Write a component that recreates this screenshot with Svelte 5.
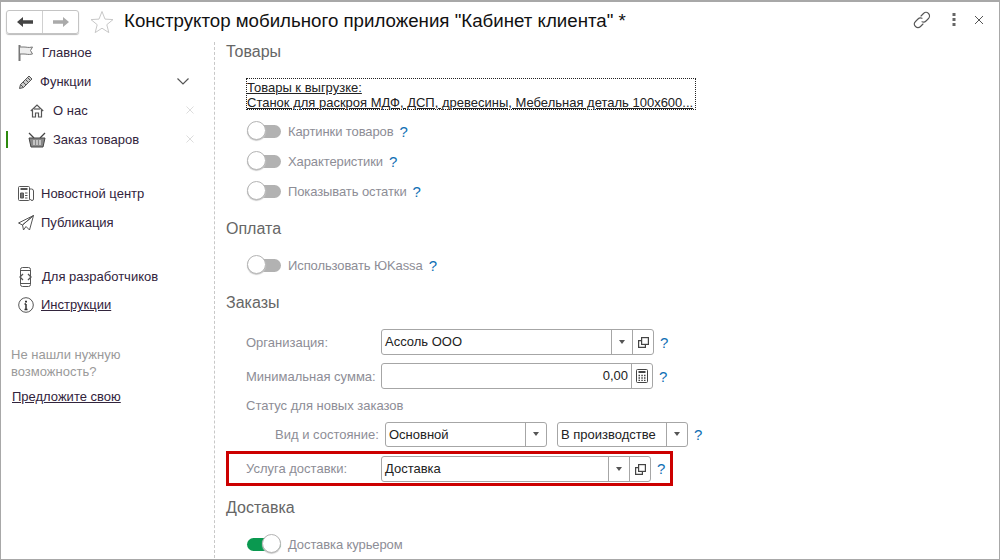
<script>
  const toggles1 = [
    { label: 'Картинки товаров' },
    { label: 'Характеристики' },
    { label: 'Показывать остатки' }
  ];
</script>

{#snippet help()}<span class="help">?</span>{/snippet}

{#snippet toggle(label, on = false)}
  <div class="toggle-row">
    <span class="toggle" class:on><span class="knob"></span></span>
    <span class="muted tl">{label}</span>
    {#if !on}{@render help()}{/if}
  </div>
{/snippet}

{#snippet open()}
  <svg class="ic" width="14" height="14" viewBox="0 0 14 14" fill="none" stroke="#444" stroke-width="1.2"><rect x="5.6" y="2.6" width="6.8" height="6.8"/><path d="M5.6 5.6H2.6v6.8h6.8V9.400"/></svg>
{/snippet}

{#snippet drop()}<span class="btn"><i class="caret"></i></span>{/snippet}

<div class="window">
  <header class="top">
    <div class="nav">
      <span class="nav-btn">
        <svg width="18" height="12" viewBox="0 0 18 12"><path d="M1 6l6-5v3.200h10v3.600H7V11z" fill="#444"/></svg>
      </span>
      <span class="nav-btn">
        <svg width="18" height="12" viewBox="0 0 18 12"><path d="M17 6l-6-5v3.200H1v3.600h10V11z" fill="#aaa"/></svg>
      </span>
    </div>
    <svg class="star" width="24" height="24" viewBox="0 0 24 24" fill="none" stroke="#c8c8c8" stroke-width="1"><path d="M12 1.500l3 7.600 8 .5-6.200 5.100 2 7.900L12 18.200 5.200 22.600l2-7.900L1 9.600l8-.5z"/></svg>
    <h1>Конструктор мобильного приложения "Кабинет клиента" *</h1>
    <div class="tools">
      <svg width="18" height="18" viewBox="0 0 18 18" fill="none" stroke="#555" stroke-width="1.100" stroke-linecap="round"><path d="M8 5l2.500-2.500a3.500 3.500 0 0 1 5 5L13 10a3.500 3.500 0 0 1-4 .7"/><path d="M10 13l-2.500 2.500a3.500 3.500 0 0 1-5-5L5 8a3.500 3.500 0 0 1 4-.7"/></svg>
      <svg width="4" height="14" viewBox="0 0 4 14" fill="#666"><rect x="0.500" y="0" width="3" height="3"/><rect x="0.500" y="5" width="3" height="3"/><rect x="0.500" y="10" width="3" height="3"/></svg>
      <svg width="10" height="10" viewBox="0 0 10 10" stroke="#555" fill="none"><path d="M1 1l8 8M9 1l-8 8"/></svg>
    </div>
  </header>

  <div class="body">
    <aside class="side">
      <div class="item first">
        <svg class="si" width="18" height="18" viewBox="0 0 18 18" fill="none" stroke="#777"><path d="M1.500 1v16" stroke-width="2"/><path d="M2 3h4c3 0 4 1 8.500 0l-2 3.500 2 3.500c-4.500 1-5.500 0-8.500 0H2" fill="#eee"/></svg>
        <span>Главное</span>
      </div>
      <div class="item func">
        <svg class="si" width="16" height="16" viewBox="0 0 16 16" fill="#ccc" stroke="#555"><path d="M1.500 14.500l1-4L11 2l3 3-8.500 8.500z"/><path d="M9.500 3.500l3 3M2.500 10.500l3 3M5 8l3 3M7.500 5.500l3 3"/></svg>
        <span>Функции</span>
        <svg class="chev" width="12" height="7" viewBox="0 0 12 7" fill="none" stroke="#555" stroke-width="1.200"><path d="M.5.500L6 6l5.500-5.500"/></svg>
      </div>
      <div class="item sub">
        <svg class="si" width="14" height="14" viewBox="0 0 14 14" fill="none" stroke="#555" stroke-width="1.200"><path d="M.8 7L7 1l6.200 6"/><path d="M2.500 6v7h3V9h3v4h3V6"/><path d="M4 5h6" /></svg>
        <span>О нас</span>
        <svg class="x" width="8" height="8" viewBox="0 0 8 8" stroke="#ddd" fill="none"><path d="M.5.500l7 7M7.500.500l-7 7"/></svg>
      </div>
      <div class="item sub active">
        <svg class="si basket" width="18" height="16" viewBox="0 0 18 16" fill="none" stroke="#444"><path d="M1 1l5 5M17 1l-5 5" stroke-width="1.300"/><path d="M1 6h16l-2 9H3z" fill="#888"/><path d="M6 8v5M9 8v5M12 8v5" stroke="#fff"/></svg>
        <span>Заказ товаров</span>
        <svg class="x" width="8" height="8" viewBox="0 0 8 8" stroke="#ddd" fill="none"><path d="M.5.500l7 7M7.500.500l-7 7"/></svg>
      </div>

      <div class="item gap">
        <svg class="si" width="16" height="15" viewBox="0 0 16 15" fill="none" stroke="#555"><rect x=".5" y=".5" width="11" height="14" rx="1"/><path d="M11.500 3h2a2 2 0 0 1 2 2v8a1.500 1.500 0 0 1-3 0"/><path d="M2.500 3h7" stroke-width="2"/><path d="M2.500 7h3v5h-3zM7 7h2.500M7 9.500h2.500M7 12h2.500" fill="#777"/></svg>
        <span>Новостной центр</span>
      </div>
      <div class="item">
        <svg class="si" width="16" height="16" viewBox="0 0 16 16" fill="none" stroke="#555"><path d="M15.500.5L.5 8l4 2zM15.500.5L4.500 10l1 5 2.500-3.500M15.500.5L11.500 15 8 11.500"/></svg>
        <span>Публикация</span>
      </div>

      <div class="item gap">
        <svg class="si" width="15" height="20" viewBox="0 0 15 20" fill="none" stroke="#555"><rect x="2.500" y=".5" width="10" height="19" rx="2"/><path d="M2.500 3.500h10M2.500 16.500h10"/><path d="M5 7L2 10l3 3M10 7l3 3-3 3" fill="#fff" stroke-width="1.300"/></svg>
        <span class="dev">Для разработчиков</span>
      </div>
      <div class="item tight">
        <svg class="si" width="16" height="16" viewBox="0 0 16 16" fill="none" stroke="#555"><circle cx="8" cy="8" r="7.300"/><path d="M8 7v5M6.500 12.500h3M6.500 7H8" stroke-width="1.500" stroke="#333"/><path d="M7 3.700h2v1.800H7z" fill="#333" stroke="none"/></svg>
        <span class="under">Инструкции</span>
      </div>

      <p class="hint">Не нашли нужную возможность?</p>
      <a class="suggest" href="#top">Предложите свою</a>
    </aside>

    <main class="main">
      <h2 class="sec-first">Товары</h2>
      <div class="linkbox"><span class="u">Товары к выгрузке:</span><br><span class="u">Станок для раскроя МДФ, ДСП, древесины, Мебельная деталь 100х600...</span></div>
      <div class="toggles">
        {#each toggles1 as t}
          {@render toggle(t.label)}
        {/each}
      </div>

      <h2 class="sec-pay">Оплата</h2>
      <div class="toggles single">{@render toggle('Использовать ЮKassa')}</div>

      <h2 class="sec-ord">Заказы</h2>
      <div class="form">
        <div class="row">
          <span class="muted lbl">Организация:</span>
          <div class="field w-org">
            <span class="val">Ассоль ООО</span>
            {@render drop()}
            <span class="btn">{@render open()}</span>
          </div>
          {@render help()}
        </div>
        <div class="row">
          <span class="muted lbl">Минимальная сумма:</span>
          <div class="field w-sum">
            <span class="val right">0,00</span>
            <span class="btn">
              <svg width="12" height="14" viewBox="0 0 12 14" fill="none" stroke="#444"><rect x=".5" y=".5" width="11" height="13" rx="1"/><path d="M2.500 3h7" stroke-width="2"/><path d="M2.500 6.500h1.500M5.300 6.500h1.500M8 6.500h1.500M2.500 9h1.500M5.300 9h1.500M8 9h1.500M2.500 11.300h1.500M5.300 11.300h1.500M8 11.300h1.500" stroke-width="1.300"/></svg>
            </span>
          </div>
          {@render help()}
        </div>
        <div class="status muted">Статус для новых заказов</div>
        <div class="row state">
          <span class="muted kind">Вид и состояние:</span>
          <div class="field w-kind"><span class="val">Основной</span>{@render drop()}</div>
          <div class="field w-st"><span class="val">В производстве</span>{@render drop()}</div>
          {@render help()}
        </div>
        <div class="highlight">
          <div class="row inner">
            <span class="muted lbl">Услуга доставки:</span>
            <div class="field w-del">
              <span class="val">Доставка</span>
              {@render drop()}
              <span class="btn">{@render open()}</span>
            </div>
            {@render help()}
          </div>
        </div>
      </div>

      <h2 class="sec-del">Доставка</h2>
      <div class="toggles single last">{@render toggle('Доставка курьером', true)}</div>
    </main>
  </div>
</div>

<style>
  :global(body) { margin: 0; background: #fff; }
  .window {
    box-sizing: border-box; width: 1000px; height: 560px; overflow: hidden;
    border: 1px solid #a8a8a8; border-top-width: 2px;
    font: 13px "Liberation Sans", Arial, sans-serif; color: #333; background: #fff;
  }
  .top { height: 38px; display: flex; align-items: center; padding-left: 5px; box-sizing: border-box; }
  .nav {
    display: flex; width: 73px; height: 24px; margin-top: 1px; box-sizing: border-box;
    border: 1px solid #c4c4c4; border-radius: 3px; box-shadow: 0 1px 1px #bbb;
  }
  .nav-btn { flex: 1; display: flex; align-items: center; justify-content: center; }
  .nav-btn + .nav-btn { border-left: 1px solid #d0d0d0; }
  .star { margin-left: 11px; margin-top: 1px; }
  h1 { font-size: 18.7px; font-weight: 400; color: #111; margin: 0 0 0 10px; white-space: nowrap; }
  .tools { margin-left: auto; display: flex; align-items: center; gap: 18px; padding-right: 15px; }
  .tools svg { margin-top: -2px; }
  .tools svg:first-child { margin-right: 3px; }

  .body { display: flex; height: 518px; }
  .side {
    width: 214px; flex: none; box-sizing: border-box; border-right: 1px dashed #c8c8c8;
    margin-top: 2px;
  }
  .item { display: flex; align-items: center; height: 29px; padding-left: 17px; color: #32243c; position: relative; }
  .item span { margin-left: 7px; }
  .item.first { margin-top: -4px; }
  .item.first span, .item.func span { margin-left: 6px; }
  .si { flex: none; }
  .chev { position: absolute; left: 176px; top: 11px; }
  .x { position: absolute; left: 185px; top: 10px; }
  .sub { padding-left: 29px; }
  .sub span { margin-left: 9px; }
  .basket { margin-left: -2px; }
  .sub.active span { margin-left: 7px; }
  .active::before { content: ""; position: absolute; left: 5px; top: 6px; width: 2px; height: 17px; background: #2d8a0e; }
  .gap { margin-top: 25px; }
  .tight { height: 27px; }
  .under { text-decoration: underline; }
  .item .dev { margin-left: 9px; }
  .hint { margin: 28px 0 0 10px; width: 130px; line-height: 17px; color: #9a9a9a; }
  .suggest { display: block; margin: 9px 0 0 11px; color: #32243c; text-decoration: underline; }

  .main { flex: 1; padding-left: 11px; min-width: 0; }
  h2 { font-size: 16px; font-weight: 400; color: #666; margin: 0; line-height: 20px; }
  .sec-first { margin-top: 2px; }
  .linkbox {
    box-sizing: border-box; width: 450px; height: 32px; margin: 16px 0 0 20px; padding: 2px 0 0 1px;
    outline: 1px dotted #222; outline-offset: -1px; line-height: 15px; color: #222; white-space: nowrap;
  }
  .u { text-decoration: underline; }
  .toggles { margin: 6px 0 0 21px; display: flex; flex-direction: column; }
  .toggles.single { margin-top: 11px; }
  .toggles.last { margin-top: 11px; }
  .toggle-row { height: 30px; display: flex; align-items: center; gap: 7px; }
  .tl { letter-spacing: -0.1px; }
  .sec-pay { margin-top: 13px; }
  .sec-ord { margin-top: 13px; }
  .toggle { position: relative; width: 34px; height: 13px; background: #b2b2b2; border-radius: 7px; flex: none; }
  .toggle.on { background: #0a9950; }
  .knob {
    position: absolute; left: 0; top: -4px; width: 17px; height: 17px;
    background: #fff; border: 1px solid #b4b4b4; border-radius: 50%; box-shadow: 0 1px 1px #ccc;
  }
  .on .knob { left: 15px; }
  .muted { color: #8d8d96; }
  .help { color: #0f6fb4; font-size: 15px; margin-left: -1px; }

  .form { margin: 12px 0 0 20px; }
  .row { display: flex; align-items: center; height: 34px; }
  .lbl { width: 135px; flex: none; }
  .field {
    box-sizing: border-box; height: 26px; display: flex; align-items: stretch; background: #fff;
    border: 1px solid #a6a6a6; border-radius: 3px; color: #222;
  }
  .w-org { width: 273px; }
  .w-sum { width: 272px; }
  .w-kind { width: 162px; height: 25px; margin-left: 11px; }
  .w-st { width: 131px; height: 25px; margin-left: 10px; }
  .w-del { width: 270px; }
  .val { flex: 1; padding: 0 3px; line-height: 24px; white-space: nowrap; overflow: hidden; }
  .val.right { text-align: right; }
  .btn { flex: none; width: 20px; display: flex; align-items: center; justify-content: center; border-left: 1px solid #a6a6a6; }
  .caret { width: 0; height: 0; border: 3.5px solid transparent; border-top: 4px solid #555; border-bottom: 0; }
  .row .help { margin-left: 6px; }
  .status { height: 20px; line-height: 20px; margin-top: 3px; }
  .state { height: 36px; }
  .kind { margin-left: 29px; width: 99px; flex: none; white-space: nowrap; }
  .highlight {
    box-sizing: border-box; width: 447px; height: 35px; margin: -1px 0 0 -20px; padding-left: 17px;
    border: 3px solid #cc0000; display: flex; align-items: center;
  }
  .inner { height: 26px; }
  .sec-del { margin-top: 12px; }
</style>
